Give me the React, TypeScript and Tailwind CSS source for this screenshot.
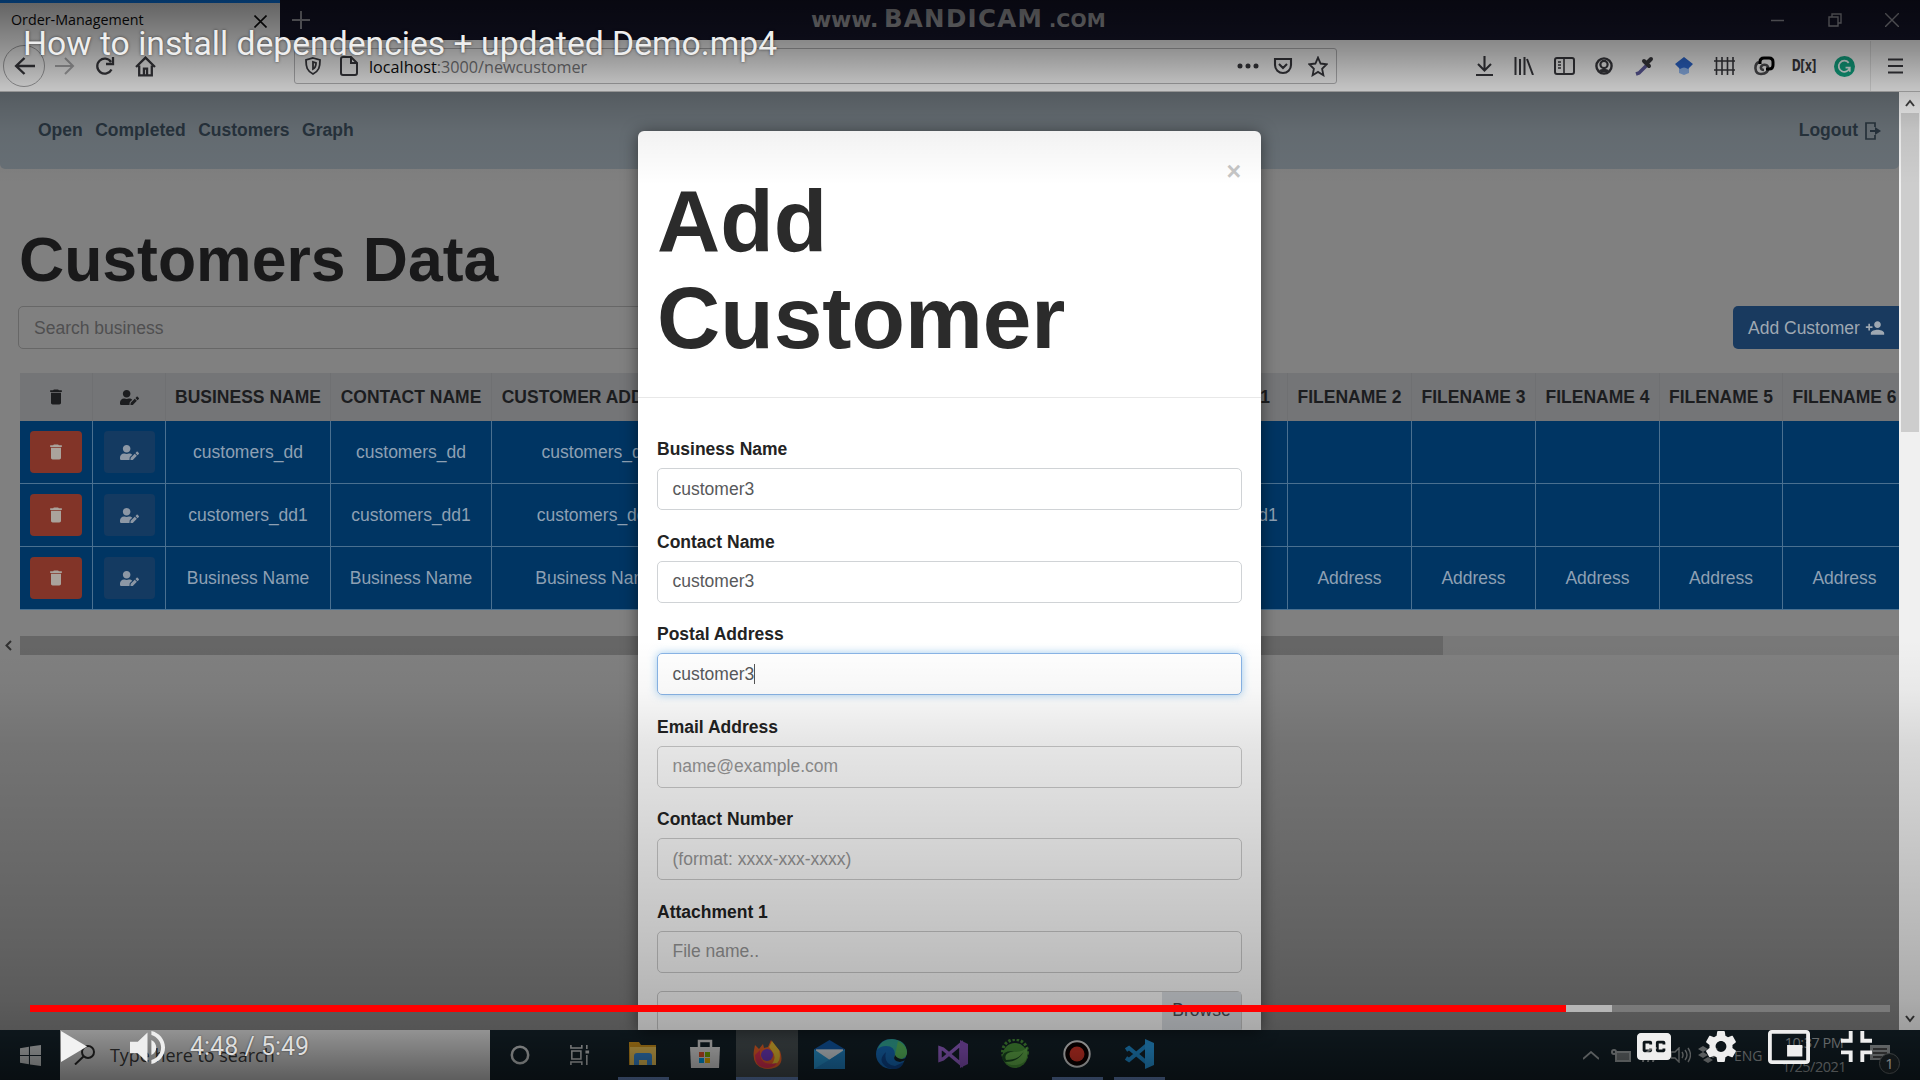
import React from "react";
import { MdDelete, MdPersonAdd } from "react-icons/md";
import { FaUserEdit } from "react-icons/fa";

type Glyph = { children: React.ReactNode; w?: number; h?: number; box?: string; className?: string };

const Svg = ({ children, w = 24, h = 24, box = "0 0 24 24", className = "" }: Glyph) => (
  <svg width={w} height={h} viewBox={box} preserveAspectRatio="none" fill="none" stroke="currentColor" strokeWidth={2} className={"shrink-0 " + className}>
    {children}
  </svg>
);

const Slot = ({ children }: { children: React.ReactNode }) => (
  <div className="flex h-full w-10 shrink-0 items-center justify-center">{children}</div>
);

function TabStrip() {
  return (
    <div className="relative flex h-10 shrink-0 bg-[#15152a] text-[#9a9aa2]">
      <div className="flex w-[280px] items-center justify-between border-t-[3px] border-[#0a84ff] bg-[#f3f3f3] pr-[13px] pl-[11px] text-[#0c0c0d]">
        <span className="-mt-[3px] font-['Open_Sans',sans-serif] text-[14.3px] leading-5">Order-Management</span>
        <Svg w={13} h={13} box="0 0 13 13"><path d="M0.500 0.500l12 12M12.500 0.500l-12 12" strokeWidth={1.6} /></Svg>
      </div>
      <div className="flex w-[42px] items-center justify-center">
        <Svg w={18} h={18} box="0 0 18 18"><path d="M9 0v18M0 9h18" /></Svg>
      </div>
      <div className="absolute top-[3px] left-[811px] flex w-[295px] items-baseline justify-between font-['DejaVu_Sans',sans-serif] font-bold text-[#a4a4a8]">
        <span className="text-[22px] leading-8 tracking-[-0.2px]">www.</span>
        <span className="text-[24.5px] leading-8 tracking-[1.3px]">BANDICAM</span>
        <span className="text-[19px] leading-8 tracking-[0.2px]">.COM</span>
      </div>
      <div className="ml-auto flex items-center">
        <div className="flex w-[57px] justify-center"><Svg w={13} h={13} box="0 0 13 13"><path d="M0 6.5h13" strokeWidth={1.5} /></Svg></div>
        <div className="flex w-[57px] justify-center"><Svg w={14} h={14} box="0 0 14 14"><path d="M1 4h9v9H1zM4 4V1h9v9h-3" strokeWidth={1.4} /></Svg></div>
        <div className="flex w-[57px] justify-center"><Svg w={14} h={14} box="0 0 14 14"><path d="M0 0l14 14M14 0L0 14" strokeWidth={1.4} /></Svg></div>
      </div>
    </div>
  );
}

function AddressBar() {
  return (
    <div className="flex h-[52px] shrink-0 items-center border-b border-[#b8b8b8] bg-[#f4f4f4] pt-px pl-[3px] text-[#38383d]">
      <div className="flex size-[42px] items-center justify-center rounded-full border border-[#a0a0a2]">
        <Svg w={21} h={20} box="0 0 20 20"><path d="M10 2l-8 8 8 8M2 10h18" strokeWidth={2.3} /></Svg>
      </div>
      <Slot><Svg w={20} h={20} box="0 0 20 20" className="text-[#a9a9ab]"><path d="M10 2l8 8-8 8M18 10H0" /></Svg></Slot>
      <Slot><Svg w={20} h={20} box="0 0 20 20"><path d="M16.5 13.5A7.5 7.5 0 1 1 16 6M18 1v7h-7" strokeWidth={2.3} /></Svg></Slot>
      <Slot><Svg w={21} h={21} box="0 0 20 20"><path d="M1 10.5l9-9 9 9M4 9v9.500h12V9M8.500 18v-6h3v6" strokeWidth={2.2} /></Svg></Slot>
      <div className="ml-[129px] flex h-9 w-[1043px] items-center rounded-[3px] border border-[#b2b2b4] pl-2.5">
        <Svg w={16} h={18} box="0 0 16 18"><path d="M8 1l7 2c0 7-1 11-7 14C2 14 1 10 1 3zM8 5v7c2-1 3-3 3-6z" strokeWidth={1.8} /></Svg>
        <Svg w={18} h={20} box="0 0 18 20" className="ml-[19px]"><path d="M3 1h8l6 6v10c0 1-1 2-2 2H3c-1 0-2-1-2-2V3c0-1 1-2 2-2zM11 1v6h6" /></Svg>
        <span className="ml-[11px] pt-[3px] font-['Open_Sans',sans-serif] text-[16.2px] text-[#77777a]"><span className="text-[#0c0c0d]">localhost</span>:3000/newcustomer</span>
        <div className="ml-auto flex h-full items-center pr-[1px]">
          <div className="flex w-[34px] justify-center"><Svg w={22} h={6} box="0 0 22 6"><path d="M3 3h.01M11 3h.01M19 3h.01" strokeWidth={5} strokeLinecap="round" /></Svg></div>
          <div className="flex w-[35px] justify-center"><Svg w={20} h={19} box="0 0 20 19"><path d="M2 2h16v6a8 8 0 0 1-16 0zM6 7l4 4 4-4" strokeWidth={2.1} /></Svg></div>
          <div className="flex w-[35px] justify-center"><Svg w={20} h={21} box="0 0 20 20"><path d="M10 1.500l2.600 5.700 6 .7-4.500 4.200 1.300 6.200L10 15.200l-5.400 3.100 1.300-6.200L1.400 7.900l6-.7z" strokeWidth={1.800} /></Svg></div>
        </div>
      </div>
      <div className="ml-auto flex h-full">
        <Slot><Svg w={17} h={20} box="0 0 17 20"><path d="M8.500 0v14M2 8l6.500 6.500L15 8M0 19h17" strokeWidth={2.100} /></Svg></Slot>
        <Slot><Svg w={20} h={18} box="0 0 20 18"><path d="M1.500 0v18M6 2v16M10.500 0v18M13 2l6 16" strokeWidth={2} /></Svg></Slot>
        <Slot><Svg w={21} h={18} box="0 0 21 18"><rect x="1" y="1" width="19" height="16" rx="2" /><path d="M10 1v16M4 5h3M4 8h3M4 11h3" strokeWidth={1.600} /></Svg></Slot>
        <Slot><Svg w={18} h={18} box="0 0 18 18"><circle cx="9" cy="9" r="7.600" strokeWidth={2.400} /><circle cx="9" cy="7.500" r="3.600" strokeWidth={2.200} /><path d="M4 13c2-1.500 8-1.500 10 0l-2 2.500H6z" fill="currentColor" stroke="none" /></Svg></Slot>
        <Slot><Svg w={20} h={20} box="0 0 20 20"><path d="M2 18l3-1 8-8" stroke="#5d5a9a" strokeWidth={3.500} /><path d="M10 5l5 5M13 7l4-4" strokeWidth={4} strokeLinecap="round" /></Svg></Slot>
        <Slot><Svg w={18} h={18} box="0 0 18 18"><path d="M4 8h10v8l-5 2-5-2z" fill="#8fb5ee" stroke="none" /><path d="M9 0l9 7-5 5q-4-3-8 0L0 7z" fill="#2c66cc" stroke="none" /></Svg></Slot>
        <Slot><Svg w={21} h={18} box="0 0 21 18"><path d="M2.500 0v18M8 0v18M13.500 0v18M19 0v18M0 4h21M0 13h21" strokeWidth={1.600} /></Svg></Slot>
        <Slot><Svg w={21} h={20} box="0 0 21 20"><path d="M5 6C0 8 0 18 7 18c5 0 8-3 7-7-1-3-6-3-7 0-.500 2 1 3 3 3" stroke="#4d4d50" strokeWidth={2.600} /><path d="M6 8V6q0-4 4-4h5q4 0 4 4v3q0 4-4 4h-3" stroke="#000" strokeWidth={3} /></Svg></Slot>
        <Slot><span className="scale-x-[0.72] font-['DejaVu_Sans',sans-serif] text-[15px] font-bold tracking-[-0.500px]">D[x]</span></Slot>
        <Slot><Svg w={21} h={21} box="0 0 20 20"><circle cx="10" cy="10" r="10" fill="#11a683" stroke="none" /><path d="M14 6.500A5.300 5.300 0 1 0 15 11h-4M15 11v4" stroke="#e8f5f2" strokeWidth={1.700} /></Svg></Slot>
        <div className="ml-[6px] flex w-[50px] items-center justify-center border-l border-[#dcdcdc]"><Svg w={15} h={16} box="0 0 15 16"><path d="M0 1.500h15M0 8h15M0 14.500h15" strokeWidth={2.200} /></Svg></div>
      </div>
    </div>
  );
}

const columns = [
  { w: "w-[73px]", head: "trash", cells: ["trash", "trash", "trash"] },
  { w: "w-[73px]", head: "edit", cells: ["edit", "edit", "edit"] },
  { w: "w-[165px]", head: "BUSINESS NAME", cells: ["customers_dd", "customers_dd1", "Business Name"] },
  { w: "w-[161px]", head: "CONTACT NAME", cells: ["customers_dd", "customers_dd1", "Business Name"] },
  { w: "w-[210px]", head: "CUSTOMER ADDRESS", cells: ["customers_dd", "customers_dd1", "Business Name"] },
  { w: "w-[447px]", head: "", cells: ["", "", ""] },
  { w: "w-[139px]", head: "FILENAME 1", cells: ["", "customers_dd1", "Address"] },
  { w: "w-[124px]", head: "FILENAME 2", cells: ["", "", "Address"] },
  { w: "w-[124px]", head: "FILENAME 3", cells: ["", "", "Address"] },
  { w: "w-[124px]", head: "FILENAME 4", cells: ["", "", "Address"] },
  { w: "w-[123px]", head: "FILENAME 5", cells: ["", "", "Address"] },
  { w: "w-[124px]", head: "FILENAME 6", cells: ["", "", "Address"] },
];

function HeadCell({ name }: { name: string }) {
  if (name === "trash") return <MdDelete size={20} />;
  if (name === "edit") return <FaUserEdit size={19} />;
  return <>{name}</>;
}

function BodyCell({ value }: { value: string }) {
  if (value === "trash")
    return <div className="flex h-[42px] w-[52px] items-center justify-center rounded-[4px] bg-[#823428] text-[#aaa39c]"><MdDelete size={20} /></div>;
  if (value === "edit")
    return <div className="flex h-[42px] w-[51px] items-center justify-center rounded-[4px] bg-[#143a61] text-[#8c97a5]"><FaUserEdit size={19} /></div>;
  return <>{value}</>;
}

function CustomersPage() {
  return (
    <div className="flex min-w-0 flex-1 flex-col overflow-hidden bg-[#808080] text-[17.5px]">
      <nav className="flex h-[77px] shrink-0 items-center gap-[12.500px] rounded-b-[5px] bg-[#687076] pr-[18px] pl-[38px] font-bold text-[#27333d]">
        <span>Open</span>
        <span>Completed</span>
        <span>Customers</span>
        <span>Graph</span>
        <span className="ml-auto flex items-center gap-[7px]">
          Logout
          <Svg w={16} h={18} box="0 0 16 18"><path d="M10 5V1H1v16h9v-4" strokeWidth={1.700} /><path d="M5 9h6" strokeWidth={2} /><path d="M10 5l6 4-6 4z" fill="currentColor" stroke="none" /></Svg>
        </span>
      </nav>
      <h1 className="mt-[56px] ml-[19px] text-[62.500px] leading-[69px] font-bold text-[#19191a]">Customers Data</h1>
      <div className="mt-[12px] ml-[18px] flex h-[43px] shrink-0 items-stretch">
        <div className="flex w-[1100px] items-center rounded-[5px] border border-[#676767] pt-px pl-[15px] text-[#4f4f50]">Search business</div>
        <div className="ml-auto flex w-[166px] items-center gap-[5px] rounded-l-[5px] bg-[#193a5f] pt-px pl-[15px] text-[#9fa8b2]">Add Customer <MdPersonAdd size={20} /></div>
      </div>
      <div className="mt-6 ml-[20px] flex h-[237px] shrink-0 overflow-hidden">
        {columns.map((col, i) => (
          <div key={i} className={"flex shrink-0 flex-col text-center whitespace-nowrap " + col.w}>
            <div className="flex h-12 items-center justify-center border-r border-[#6f7072] bg-[#747577] font-bold text-[#1c1d1f]"><HeadCell name={col.head} /></div>
            {col.cells.map((cell, j) => (
              <div key={j} className="flex flex-1 items-center justify-center border-r border-b border-[#4a7090] bg-[#003563] text-[#8ea0b3]"><BodyCell value={cell} /></div>
            ))}
          </div>
        ))}
      </div>
      <div className="mt-[26px] flex h-[19px] shrink-0 bg-[#787878]">
        <div className="flex w-5 items-center bg-[#808080] pl-[5px] text-[#303030]"><Svg w={7} h={11} box="0 0 7 11"><path d="M6 1L1.500 5.500 6 10" /></Svg></div>
        <div className="w-[1423px] bg-[#666]" />
      </div>
    </div>
  );
}

const fields = [
  { label: "Business Name", text: "customer3", state: "filled" },
  { label: "Contact Name", text: "customer3", state: "filled" },
  { label: "Postal Address", text: "customer3", state: "focus" },
  { label: "Email Address", text: "name@example.com", state: "empty" },
  { label: "Contact Number", text: "(format: xxxx-xxx-xxxx)", state: "empty" },
  { label: "Attachment 1", text: "File name..", state: "empty" },
];

const stateClass: Record<string, string> = {
  filled: "border-[#d0d3d6] text-[#58595b]",
  focus: "border-[#89b4e6] text-[#58595b] shadow-[0_0_9px_rgba(102,175,233,0.6)]",
  empty: "border-[#ccc] text-[#999]",
};

function AddCustomerDialog() {
  return (
    <div className="absolute top-[131px] left-[638px] flex h-[899px] w-[623px] flex-col overflow-hidden rounded-t-[6px] bg-white text-[17.500px] text-[#232323] shadow-[0_2px_16px_rgba(0,0,0,0.5)]">
      <div className="flex h-[267px] shrink-0 justify-between border-b border-[#e8e8e8] pt-[42px] pr-[20px] pl-[19px]">
        <h2 className="w-[420px] text-[87.500px] leading-[96.500px] font-bold text-[#2b2b2b]">Add Customer</h2>
        <span className="-mt-[15px] text-[25px] leading-[26px] font-bold text-[#c6c6c6]">×</span>
      </div>
      <div className="px-[19px] pt-[38px]">
        {fields.map((f) => (
          <div key={f.label} className="mb-[18.500px] h-[74px]">
            <div className="mb-[6px] h-[26px] leading-[27px] font-bold">{f.label}</div>
            <div className={"flex h-[42px] items-center rounded-[5px] border-[1.500px] pl-[14.500px] " + stateClass[f.state]}>
              {f.text}
              {f.state === "focus" && <span className="h-5 w-px bg-[#555]" />}
            </div>
          </div>
        ))}
        <div className="flex h-[42px] justify-between rounded-[5px] border-[1.500px] border-[#ccc]">
          <span />
          <span className="flex w-[79px] items-center justify-center bg-[#dfe3e8] pb-1 text-[#495057]">Browse</span>
        </div>
      </div>
    </div>
  );
}

const TaskButton = ({ children, active, running }: { children: React.ReactNode; active?: boolean; running?: boolean }) => (
  <div className={"flex h-full w-[62px] shrink-0 flex-col items-center justify-between " + (active ? "bg-[#4b5457]" : "")}>
    <span className="h-px" />
    <div className="flex h-[32px] items-center">{children}</div>
    <span className={"h-[3px] " + (active ? "w-full bg-[#6f92cf]" : running ? "w-[51px] bg-[#6f92cf]" : "w-0")} />
  </div>
);

function Taskbar() {
  return (
    <div className="flex h-[50px] shrink-0 items-center bg-[#14222a] text-[#cfd2d3]">
      <div className="flex w-[60px] justify-center">
        <Svg w={21} h={21} box="0 0 20 20"><path d="M0 3l8.500-1.300v7.800H0zM9.500 1.500L20 0v9.500H9.500zM0 10.500h8.500v7.800L0 17zM9.500 10.500H20V20L9.500 18.500z" fill="currentColor" stroke="none" /></Svg>
      </div>
      <div className="flex h-full w-[430px] items-center bg-[#dedede] pl-[14px] text-[#2a2a2a]">
        <Svg w={22} h={20} box="0 0 22 20"><circle cx="14" cy="7" r="6" /><path d="M10 11l-9 8.500" /></Svg>
        <span className="ml-[14px] font-['Open_Sans',sans-serif] text-[17.900px] text-[#3a3a3a]">Type here to search</span>
      </div>
      <div className="flex w-[60px] justify-center"><Svg w={20} h={20} box="0 0 20 20"><circle cx="10" cy="10" r="8.200" strokeWidth={2.500} /></Svg></div>
      <div className="mr-[2px] flex w-[60px] justify-center"><Svg w={20} h={20} box="0 0 22 20"><path d="M1 0v3h12V0M1 20v-3h12v3M2 6h10v8H2zM18.500 0v4M18.500 10v10" strokeWidth={1.700} /><path d="M17 7h4" strokeWidth={3} /></Svg></div>
      <TaskButton running>
        <Svg w={28} h={24} box="0 0 28 24"><g stroke="none"><path d="M0 0h10l2 3h15v20H0z" fill="#d99b1e" /><path d="M1 5h26v18H1z" fill="#f6cc5c" /><path d="M5 23v-9q0-3 3-3h12q3 0 3 3v9h-5v-5h-8v5z" fill="#3b8edb" /></g></Svg>
      </TaskButton>
      <TaskButton>
        <Svg w={30} h={30} box="0 0 30 30"><path d="M9 9V2h12v7" stroke="#e7e7e7" strokeWidth={2.500} /><path d="M0 8h30l-1 21H1z" fill="#e9e9e9" stroke="none" /><g stroke="none"><path fill="#e8562a" d="M9 13h5v5H9z" /><path fill="#7fba00" d="M15 13h5v5h-5z" /><path fill="#00a4ef" d="M9 19h5v5H9z" /><path fill="#ffb900" d="M15 19h5v5h-5z" /></g></Svg>
      </TaskButton>
      <TaskButton active>
        <Svg w={30} h={29} box="0 0 30 29"><g stroke="none"><path d="M2 10l1-5 4 4 4-5 1 4 4-1 3-7 4 6 5 5q6 17-12 18Q-1 28 2 10z" fill="#ff6a2a" /><path d="M17 7l3-6 7 9q4 14-9 16 8-8 2-15z" fill="#ffcc36" /><path d="M3 15q0 13 13 13 7-1 9-5-18 4-17-13z" fill="#f0355a" /><circle cx="15" cy="15" r="6" fill="#7a3fd0" /></g></Svg>
      </TaskButton>
      <TaskButton>
        <Svg w={31} h={29} box="0 0 31 28"><g stroke="none"><path d="M0 9L15.500 0 31 9v18H0z" fill="#1260b5" /><path d="M2 9h27v16H2z" fill="#e6eef4" /><path d="M0 9l15.500 10L31 9v19H0z" fill="#2ba1e2" /><path d="M0 28L31 10v18z" fill="#2289cf" /></g></Svg>
      </TaskButton>
      <TaskButton>
        <Svg w={31} h={30} box="0 0 31 30"><g stroke="none"><circle cx="15" cy="15" r="15" fill="#1874c8" /><path d="M1 11Q5 0 16 0q14 1 15 13 0 7-8 7-6 0-4-4Q19 7 10 7 4 7 1 11z" fill="#39bba8" /><path d="M22 2q9 5 9 12-1 6-8 6-6 0-4-4z" fill="#62ce68" /><path d="M10 13q-3 12 9 14l9-4q-4 10-16 6Q0 22 10 13z" fill="#0e4c9a" /><path d="M19 16q-3 6 5 7l6-2q1-2 0-2-4 2-8 0-2-1-3-3z" fill="#14222a" /></g></Svg>
      </TaskButton>
      <TaskButton>
        <Svg w={30} h={30} box="0 0 30 30"><path d="M2 9v12l3-1 18-15v20L5 10z" stroke="#a36add" strokeWidth={3.500} /><path d="M22 1l8 4v20l-8 4z" fill="#9358cb" stroke="none" /></Svg>
      </TaskButton>
      <TaskButton>
        <Svg w={30} h={30} box="0 0 30 30">
          <circle cx="15" cy="13" r="12.500" stroke="#4e9f3d" strokeWidth={3} strokeDasharray="2.500 1.800" />
          <circle cx="15" cy="16.500" r="12.500" fill="#4e9f3d" stroke="none" />
          <path d="M4 21Q4 13 14 13q10 0 13-5 3 18-13 18-5 0-7-2z" fill="#6cbf52" stroke="none" />
          <path d="M2 20l3 3q14 0 19-11-5 9-18 9Q3 14 14 12 2 11 2 20z" fill="#1b4f24" stroke="none" />
        </Svg>
      </TaskButton>
      <TaskButton running>
        <Svg w={28} h={28} box="0 0 28 28"><circle cx="14" cy="14" r="12.700" fill="#0c0000" stroke="#eee" strokeWidth={2} /><circle cx="14" cy="14" r="7.500" fill="#e8392b" stroke="none" /></Svg>
      </TaskButton>
      <TaskButton running>
        <Svg w={30} h={30} box="0 0 30 30"><path d="M2 11l3-2 18 15V6L5 21l-3-2" stroke="#2297e0" strokeWidth={4} /><path d="M21 0l9 4v22l-9 4z" fill="#2ba5f0" stroke="none" /></Svg>
      </TaskButton>
      <div className="ml-auto flex h-full items-center font-['Open_Sans',sans-serif] text-[14px] text-[#a5abad]">
        <div className="flex w-[30px] justify-center"><Svg w={16} h={9} box="0 0 16 9"><path d="M0 8l8-7 8 7" strokeWidth={1.700} /></Svg></div>
        <div className="flex w-[30px] justify-center"><Svg w={20} h={13} box="0 0 20 13"><path d="M5 3h14v9H5z" fill="#777d80" /><circle cx="3" cy="3" r="2" /></Svg></div>
        <div className="flex w-[30px] justify-center"><Svg w={18} h={16} box="0 0 18 16"><path d="M1 15A14 14 0 0 1 15 1M6 15a9 9 0 0 1 9-9M11 15a4 4 0 0 1 4-4" /></Svg></div>
        <div className="flex w-[30px] justify-center"><Svg w={20} h={16} box="0 0 20 16"><path d="M0 5h4l4-4v14l-4-4H0zM11 5q2 3 0 6M14 3q4 5 0 10M17 1q5 7 0 14" strokeWidth={1.400} /></Svg></div>
        <div className="flex w-[24px] justify-center"><Svg w={20} h={18} box="0 0 20 18"><path d="M5 0l5 3-5 3-5-3zM15 0l5 3-5 3-5-3zM5 6l5 3-5 3-5-3zM15 6l5 3-5 3-5-3zM10 11l5 3-5 3-5-3z" fill="currentColor" stroke="none" /></Svg></div>
        <span className="ml-[14px] w-[36px]">ENG</span>
        <div className="flex w-[88px] flex-col items-center text-[14.500px] leading-6 tracking-[-0.500px]"><span>10:37 PM</span><span>1/25/2021</span></div>
        <div className="relative mr-[17px] ml-[12px] flex w-[33px] items-center">
          <Svg w={20} h={20} box="0 0 20 20"><path d="M0 0h20v15h-6l-4 5v-5H0z" fill="#a5abad" stroke="none" /><path d="M3 4h14M3 8h14M3 12h9" stroke="#333" strokeWidth={1.500} /></Svg>
          <span className="absolute top-[8px] left-[9px] flex size-[21px] items-center justify-center rounded-full border border-[#6d7375] bg-[#222c30] text-[15px] text-white">1</span>
        </div>
      </div>
    </div>
  );
}

function PlayerControls() {
  return (
    <div className="absolute inset-0 flex flex-col justify-between font-[Roboto,sans-serif] text-[#eee]">
      <h3 className="pt-[22px] pl-[23px] text-[33.700px] leading-[44px] whitespace-nowrap [text-shadow:0_0_3px_rgba(0,0,0,0.6)]">How to install dependencies + updated Demo.mp4</h3>
      <div>
        <div className="mx-[30px] flex h-[7px] bg-white/20">
          <div className="w-[1536px] bg-[#f00]" />
          <div className="w-[46px] bg-white/45" />
        </div>
        <div className="flex h-[68px] items-start pt-[19px] pr-[48px] pl-[61px]">
          <Svg w={26} h={31} box="0 0 26 31"><path d="M0 0l26 15.500L0 31z" fill="#f2f2f2" stroke="none" /></Svg>
          <Svg w={35} h={33} box="8 9.230 18 17.540" className="ml-[43px]"><path d="M8,21 L12,21 L17,26 L17,10 L12,15 L8,15 Z M19,14 L19,22 C20.48,21.32 21.5,19.77 21.5,18 C21.5,16.26 20.48,14.74 19,14 Z M19,11.29 C21.89,12.15 24,14.83 24,18 C24,21.17 21.89,23.85 19,24.71 L19,26.77 C23.01,25.86 26,22.28 26,18 C26,13.72 23.01,10.14 19,9.23 Z" fill="#eee" stroke="none" /></Svg>
          <span className="ml-[25px] text-[25px] leading-[32px] text-[#ddd] [text-shadow:0_0_2px_rgba(0,0,0,0.6)]">4:48 / 5:49</span>
          <Svg w={34} h={27} box="9 11 18 14" className="mt-[2px] ml-auto"><path fillRule="evenodd" fill="#eee" stroke="none" d="M11,11 C9.89,11 9,11.9 9,13 L9,23 C9,24.1 9.89,25 11,25 L25,25 C26.1,25 27,24.1 27,23 L27,13 C27,11.9 26.1,11 25,11 Z M17,17 L15.5,17 L15.5,16.5 L13.5,16.5 L13.5,19.5 L15.5,19.5 L15.5,19 L17,19 L17,20 C17,20.55 16.55,21 16,21 L13,21 C12.45,21 12,20.55 12,20 L12,16 C12,15.45 12.45,15 13,15 L16,15 C16.55,15 17,15.45 17,16 Z M24,17 L22.5,17 L22.5,16.5 L20.5,16.5 L20.5,19.5 L22.5,19.5 L22.5,19 L24,19 L24,20 C24,20.55 23.55,21 23,21 L20,21 C19.45,21 19,20.55 19,20 L19,16 C19,15.45 19.45,15 20,15 L23,15 C23.55,15 24,15.45 24,16 Z" /></Svg>
          <Svg w={30} h={31} box="10.200 10 15.600 16" className="ml-[35px]"><path fill="#eee" stroke="none" d="m 23.94,18.78 c .03,-0.25 .05,-0.51 .05,-0.78 0,-0.27 -0.02,-0.52 -0.05,-0.78 l 1.68,-1.32 c .15,-0.12 .19,-0.33 .09,-0.51 l -1.6,-2.76 c -0.09,-0.17 -0.31,-0.24 -0.48,-0.17 l -1.99,.8 c -0.41,-0.32 -0.86,-0.58 -1.35,-0.78 l -0.30,-2.12 c -0.02,-0.19 -0.19,-0.33 -0.39,-0.33 l -3.2,0 c -0.2,0 -0.36,.14 -0.39,.33 l -0.30,2.12 c -0.48,.2 -0.93,.47 -1.35,.78 l -1.99,-0.8 c -0.18,-0.07 -0.39,0 -0.48,.17 l -1.6,2.76 c -0.10,.17 -0.05,.39 .09,.51 l 1.68,1.32 c -0.03,.25 -0.05,.52 -0.05,.78 0,.26 .02,.52 .05,.78 l -1.68,1.32 c -0.15,.12 -0.19,.33 -0.09,.51 l 1.6,2.76 c .09,.17 .31,.24 .48,.17 l 1.99,-0.8 c .41,.32 .86,.58 1.35,.78 l .30,2.12 c .02,.19 .19,.33 .39,.33 l 3.2,0 c .2,0 .36,-0.14 .39,-0.33 l .30,-2.12 c .48,-0.2 .93,-0.47 1.35,-0.78 l 1.99,.8 c .18,.07 .39,0 .48,-0.17 l 1.6,-2.76 c .09,-0.17 .05,-0.39 -0.09,-0.51 l -1.68,-1.32 0,0 z m -5.94,2.01 c -1.54,0 -2.8,-1.25 -2.8,-2.8 0,-1.54 1.25,-2.8 2.8,-2.8 1.54,0 2.8,1.25 2.8,2.8 0,1.54 -1.25,2.8 -2.8,2.8 l 0,0 z" /></Svg>
          <Svg w={42} h={34} box="7 9 22 18" className="-mt-px ml-[32px]"><path fillRule="evenodd" fill="#eee" stroke="none" d="M25,17 L17,17 L17,23 L25,23 Z M29,25 L29,10.98 C29,9.88 28.1,9 27,9 L9,9 C7.9,9 7,9.88 7,10.98 L7,25 C7,26.1 7.9,27 9,27 L27,27 C28.1,27 29,26.1 29,25 Z M27,25.02 L9,25.02 L9,10.97 L27,10.97 Z" /></Svg>
          <Svg w={31} h={31} box="10 10 16 16" className="ml-[31px]"><path fill="#eee" stroke="none" d="M14 14h-4v2h6v-6h-2zM22 14v-4h-2v6h6v-2zM20 26h2v-4h4v-2h-6zM10 22h4v4h2v-6h-6z" /></Svg>
        </div>
      </div>
    </div>
  );
}

export default function App() {
  return (
    <div className="relative flex h-[1080px] w-[1920px] flex-col overflow-hidden bg-[#808080] font-['Liberation_Sans',Arial,sans-serif]">
      <TabStrip />
      <AddressBar />
      <div className="flex min-h-0 flex-1">
        <CustomersPage />
        <div className="flex w-[21px] shrink-0 flex-col items-center bg-[#f0f0f0] text-[#404040]">
          <div className="flex h-[21px] items-center"><Svg w={10} h={8} box="0 0 10 8"><path d="M1 7l4-5 4 5" /></Svg></div>
          <div className="h-[319px] w-[18px] bg-[#cdcdcd]" />
          <div className="mt-auto flex h-[22px] items-center"><Svg w={10} h={8} box="0 0 10 8"><path d="M1 1l4 5 4-5" /></Svg></div>
        </div>
      </div>
      <Taskbar />
      <AddCustomerDialog />
      <div className="absolute inset-0 bg-[linear-gradient(to_bottom,rgba(0,0,0,0.6)_0px,rgba(0,0,0,0.52)_20px,rgba(0,0,0,0.4)_50px,rgba(0,0,0,0.22)_85px,rgba(0,0,0,0.12)_110px,rgba(0,0,0,0.05)_132px,rgba(0,0,0,0)_185px,rgba(0,0,0,0)_640px,rgba(0,0,0,0.03)_690px,rgba(0,0,0,0.1)_745px,rgba(0,0,0,0.16)_830px,rgba(0,0,0,0.24)_940px,rgba(0,0,0,0.29)_1000px,rgba(0,0,0,0.34)_1030px,rgba(0,0,0,0.58)_1080px)]" />
      <PlayerControls />
    </div>
  );
}
